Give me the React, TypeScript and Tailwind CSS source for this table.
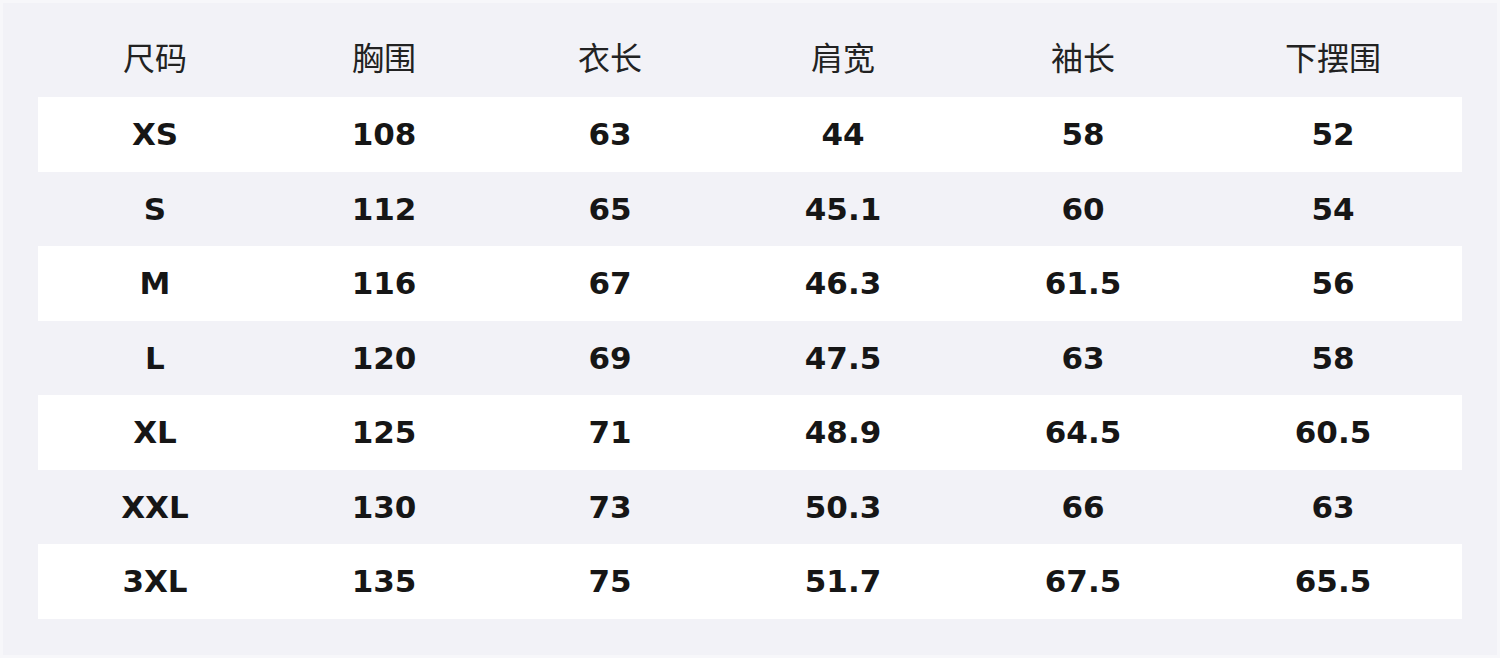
const cols = [
  { label: '尺码', w: 'w-[234px]' },
  { label: '胸围', w: 'w-[224px]' },
  { label: '衣长', w: 'w-[228px]' },
  { label: '肩宽', w: 'w-[238px]' },
  { label: '袖长', w: 'w-[242px]' },
  { label: '下摆围', w: 'w-[258px]' },
];

const rows = [
  ['XS', '108', '63', '44', '58', '52'],
  ['S', '112', '65', '45.1', '60', '54'],
  ['M', '116', '67', '46.3', '61.5', '56'],
  ['L', '120', '69', '47.5', '63', '58'],
  ['XL', '125', '71', '48.9', '64.5', '60.5'],
  ['XXL', '130', '73', '50.3', '66', '63'],
  ['3XL', '135', '75', '51.7', '67.5', '65.5'],
];

export default function App() {
  return (
    <div className="h-[658px] w-[1500px] bg-[#f2f2f7] border-[3px] border-[#f7f7fa] px-[35px] pt-[16px]">
      <div className="flex h-[78px] items-center text-[32px] text-[#222] font-['Noto_Sans_CJK_SC',sans-serif] pb-[4px]">
        {cols.map((c) => (
          <div key={c.label} className={`${c.w} text-center`}>
            {c.label}
          </div>
        ))}
      </div>
      {rows.map((r, i) => (
        <div
          key={r[0]}
          className={`flex h-[74.5px] items-center text-[31px] font-bold text-[#161616] font-['DejaVu_Sans',sans-serif] ${i % 2 === 0 ? 'bg-white' : ''}`}
        >
          {r.map((v, j) => (
            <div key={j} className={`${cols[j].w} text-center`}>
              {v}
            </div>
          ))}
        </div>
      ))}
    </div>
  );
}
